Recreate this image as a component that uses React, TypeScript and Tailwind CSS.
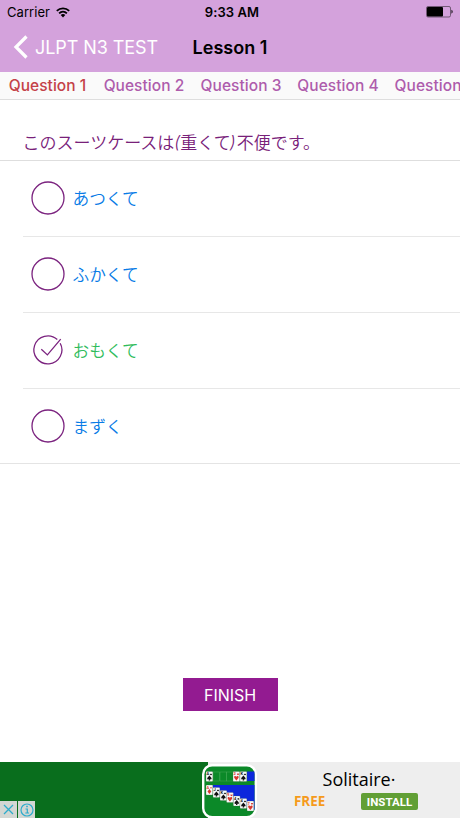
import clsx from 'clsx';

const tabs = ['Question 1', 'Question 2', 'Question 3', 'Question 4', 'Question 5'];

const answers = [
  { text: 'あつくて', correct: false },
  { text: 'ふかくて', correct: false },
  { text: 'おもくて', correct: true },
  { text: 'まずく', correct: false },
];

const suits = {
  spade: 'M3.4 3.9C2.8 5 1.2 5.6 1.2 7C1.2 8.1 2.5 8.3 3 7.6L2.6 9H4.2L3.8 7.6C4.3 8.3 5.6 8.1 5.6 7C5.6 5.6 4 5 3.4 3.9Z',
  heart: 'M3.4 9.1C2.6 8 1.1 7 1.1 5.6C1.1 4.2 2.8 4 3.4 5.2C4 4 5.7 4.2 5.7 5.6C5.7 7 4.2 8 3.4 9.1Z',
  diamond: 'M3.4 4L5.3 6.5L3.4 9L1.5 6.5Z',
};

type CardProps = { x: number; y: number; label: string; suit: keyof typeof suits };

// Diagonal row of cards in the solitaire icon
const cards: CardProps[] = [
  { x: 4, y: 21, label: 'A', suit: 'diamond' },
  { x: 11, y: 23.5, label: 'J', suit: 'spade' },
  { x: 18, y: 26.5, label: 'K', suit: 'spade' },
  { x: 24.5, y: 28.5, label: '9', suit: 'heart' },
  { x: 31.3, y: 32, label: '4', suit: 'spade' },
  { x: 38, y: 34.5, label: '4', suit: 'spade' },
  { x: 45, y: 37, label: '7', suit: 'heart' },
];

const topCards: CardProps[] = [
  { x: 4, y: 7.5, label: 'A', suit: 'spade' },
  { x: 31, y: 7.5, label: '2', suit: 'heart' },
  { x: 38, y: 7.5, label: 'K', suit: 'spade' },
];

const WifiIcon = () => (
  <svg width="14" height="11" viewBox="0 0 14 11" fill="none" stroke="#000" strokeWidth="1.8">
    <path d="M0.8 3.9C4.3 0.6 9.7 0.6 13.2 3.9" />
    <path d="M3.1 6.3C5.3 4.2 8.7 4.2 10.9 6.3" />
    <path d="M7 10.5L4.7 8C6 6.8 8 6.8 9.3 8Z" fill="#000" stroke="none" />
  </svg>
);

const BatteryIcon = () => (
  <svg width="27" height="12" viewBox="0 0 27 12">
    <rect x="0.5" y="0.5" width="24" height="10.5" rx="1.5" fill="none" stroke="#49394b" strokeWidth="0.7" />
    <rect x="1" y="1" width="16" height="9.5" rx="1" fill="#000" />
    <path d="M25.5 3.8C27 4.4 27 7.1 25.5 7.7Z" fill="#000" />
  </svg>
);

const RadioIcon = ({ checked }: { checked: boolean }) => (
  <svg width="34" height="34" viewBox="0 0 34 34" fill="none" stroke="#7b237f" strokeWidth="1.3">
    {checked ? (
      <>
        <path d="M26.3 6.5A14 14 0 1 0 29.2 10.2" />
        <path d="M10.3 16.3L16.4 21.9L29.7 6.1" />
      </>
    ) : (
      <circle cx="17" cy="17" r="16" />
    )}
  </svg>
);

const PlayingCard = ({ x, y, label, suit }: CardProps) => {
  const color = suit === 'spade' ? '#111' : '#d7382f';
  return (
    <g transform={`translate(${x} ${y})`}>
      <rect width="6.8" height="10" rx="0.7" fill="#f8faf8" stroke="#455d49" strokeWidth="0.25" />
      <text x="0.6" y="3.7" fontSize="4" fontWeight="bold" fill={color} fontFamily="Roboto, sans-serif">{label}</text>
      <path d={suits[suit]} transform="translate(3.3 0.4) scale(.5 .38)" fill={color} />
      <path d={suits[suit]} fill={color} />
    </g>
  );
};

const SolitaireIcon = () => (
  <svg width="55" height="54" viewBox="0 0 55 54">
    <rect x="1.2" y="1.2" width="52.6" height="52" rx="9" fill="#0b8928" stroke="#fff" strokeWidth="2.4" />
    <path d="M45 7.5H52.5V17H45ZM11 21H52.5V46L11 29Z" fill="#0c27dc" />
    <g fill="none" stroke="#43a756" strokeWidth="0.5">
      <rect x="11" y="8" width="6.5" height="9" />
      <rect x="18" y="8" width="6.5" height="9" />
      <rect x="24.7" y="8" width="6.5" height="9" />
    </g>
    {topCards.map((card) => <PlayingCard key={card.x} {...card} />)}
    {cards.map((card) => <PlayingCard key={card.x} {...card} />)}
  </svg>
);

const Header = () => (
  <header className="h-[72px] bg-[#d4a2dc] text-black">
    <div className="grid h-6 grid-cols-3 items-center pl-[7px] pr-[7px]">
      <div className="flex items-center gap-[6px]">
        <span className="text-[13px] leading-4 tracking-[0.05px]">Carrier</span>
        <WifiIcon />
      </div>
      <span className="pl-1 text-center text-[13px] font-semibold leading-4 tracking-[0.1px]">9:33 AM</span>
      <div className="flex justify-end"><BatteryIcon /></div>
    </div>
    <div className="grid h-[46px] grid-cols-[192px_76px_1fr] items-center">
      <button className="flex h-full items-center pl-[13px] text-white">
        <svg width="16" height="24" viewBox="0 0 16 24" fill="none" stroke="currentColor" strokeWidth="3.2">
          <path d="M13.5 1.5L3 12L13.5 22.5" />
        </svg>
        <span className="ml-[6px] whitespace-nowrap text-[18px] tracking-[-0.08px]">JLPT N3 TEST</span>
      </button>
      <h1 className="whitespace-nowrap text-center text-[18px] font-semibold tracking-[0.02px]">Lesson 1</h1>
    </div>
  </header>
);

const AdBanner = () => (
  <footer className="flex h-14 bg-[#eee]">
    <div className="flex w-[208px] items-end bg-[#096e1d]">
      <div className="flex h-[17px] gap-px text-[#2eaccc]">
        <span className="flex w-[17px] items-center justify-center bg-[#d3d7d3]">
          <svg width="13" height="13" viewBox="0 0 13 13" stroke="currentColor" strokeWidth="1.3"><path d="M2 2L11 11M11 2L2 11" /></svg>
        </span>
        <span className="flex w-[17px] items-center justify-center bg-[#d3d7d3]">
          <svg width="14" height="14" viewBox="0 0 14 14" fill="none" stroke="currentColor" strokeWidth="1.2">
            <circle cx="7" cy="7" r="6" />
            <path d="M5.5 6H7.3V10M5.3 10H9" />
            <path d="M7 2.8V4.3" strokeWidth="1.6" />
          </svg>
        </span>
      </div>
    </div>
    <div className="-ml-[6px] flex items-end"><SolitaireIcon /></div>
    <div className="flex flex-1 flex-col items-center pl-px font-['Open_Sans',sans-serif]">
      <div className="mt-[5px] text-[18px] leading-6 text-black">Solitaire·</div>
      <div className="mt-px flex items-center pr-[6px]">
        <span className="w-[67px] text-[13.4px] font-bold leading-[18px] text-[#f59b1c]">FREE</span>
        <span className="flex h-[17px] w-[57px] items-center justify-center rounded-[2px] bg-[#619f35] pt-px font-['Roboto',sans-serif] text-[11.5px] font-bold leading-4 text-white">INSTALL</span>
      </div>
    </div>
  </footer>
);

const App = () => {
  return (
    <div className="flex h-[818px] w-[460px] flex-col overflow-hidden bg-white font-['Inter',sans-serif]">
      <Header />
      <nav className="flex h-7 shrink-0 overflow-hidden border-b border-[#dedede] bg-[#fafafa]">
        {tabs.map((tab, index) => (
          <button
            key={tab}
            className={clsx(
              'flex h-7 shrink-0 items-center justify-center whitespace-nowrap text-[15.5px] font-medium tracking-[0.05px]',
              index === 0 ? 'w-24 border-b border-[#c93e45] pr-px text-[#c44148]' : 'w-[97px] pb-px pr-px text-[#ae5cac]'
            )}
          >
            {tab}
          </button>
        ))}
      </nav>
      <main className="flex-1 font-['Noto_Sans_CJK_JP',sans-serif]">
        <h2 className="flex h-[61px] items-end border-b border-[#dedede] pb-[6px] pl-[22.5px] text-[17px] font-[350] leading-6 text-[#782079]">
          このスーツケースは<i className="w-[6px] font-['Inter','Noto_Sans_CJK_JP',sans-serif]">(</i>重くて<i className="-ml-px w-[7px] font-['Inter','Noto_Sans_CJK_JP',sans-serif]">)</i>不便です。
        </h2>
        {answers.map((answer, index) => {
          const last = index === answers.length - 1;
          return (
            <div key={answer.text} className={clsx(last ? 'border-b border-[#e4e4e4]' : 'pl-[23px]')}>
              <div className={clsx('flex items-center', last ? 'h-[74px] pl-[31px]' : 'h-[76px] border-b border-[#e7e7e7] pb-px pl-2')}>
                <RadioIcon checked={answer.correct} />
                <span className={clsx('ml-[7.5px] pt-px text-[16.7px] font-[350]', answer.correct ? 'text-[#30bc5c]' : 'text-[#087be6]')}>{answer.text}</span>
              </div>
            </div>
          );
        })}
        <button className="mx-auto mt-[214px] flex h-[33px] w-[95px] items-center justify-center bg-[#931b91] font-['Inter',sans-serif] text-[16px] tracking-[-0.05px] text-white">
          FINISH
        </button>
      </main>
      <AdBanner />
    </div>
  );
};

export default App;
